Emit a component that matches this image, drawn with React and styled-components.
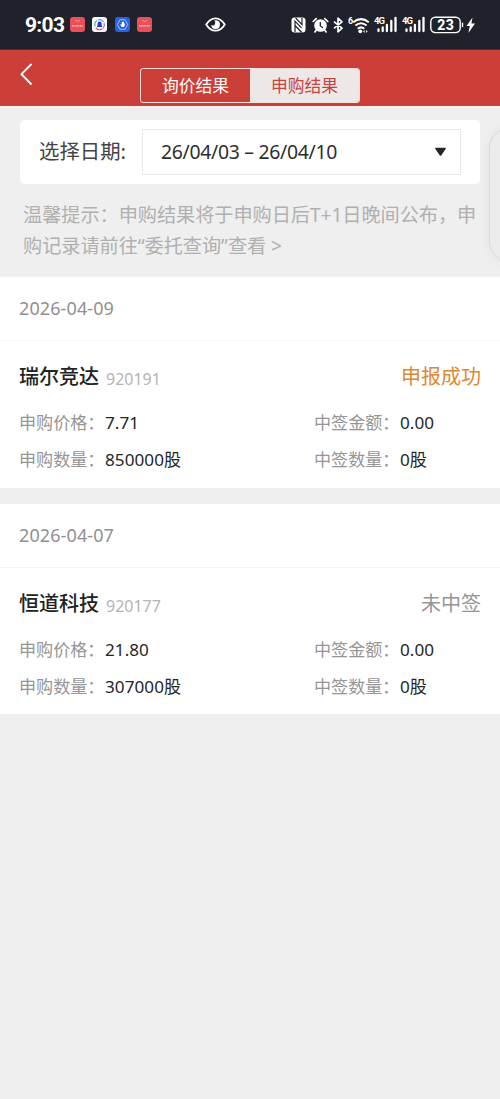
import React from 'react';
import styled, { createGlobalStyle } from 'styled-components';

const GlobalStyle = createGlobalStyle`
    * {
        box-sizing: border-box;
    }

    body {
        margin: 0;
        background-color: #efefef;
        font-family: 'Noto Sans', 'Noto Sans CJK SC', sans-serif;
        color: #262626;
    }
`;

const Page = styled.div`
    position: relative;
    min-height: 1099px;
    overflow: hidden;
    background-color: #efefef;
`;

const StatusBar = styled.div`
    display: flex;
    align-items: center;
    height: 50px;
    padding: 0 24px 0 25px;
    background-color: #1f222b;
    border-bottom: 1px solid #512a35;
    font-family: Roboto, sans-serif;
    color: #fff;

    svg {
        display: block;
        flex: none;
    }
`;

const Clock = styled.span`
    width: 39px;
    margin-right: 6px;
    font-size: 21px;
    font-weight: 700;
    letter-spacing: -.7px;
    white-space: nowrap;
`;

const AppIcons = styled.div`
    display: flex;
    gap: 7.4px;
    margin-right: 53px;
`;

const SystemIcons = styled.div`
    display: flex;
    align-items: center;
    gap: 4px;
    margin-left: auto;
`;

const Header = styled.header`
    display: flex;
    height: 56px;
    padding-left: 20px;
    background-color: #cc3f38;
    border-bottom: 1px solid #bd474a;
`;

const BackButton = styled.button`
    width: 13px;
    height: 24px;
    margin: 12px 107px 0 0;
    padding: 0;
    border: 0;
    background: none;
`;

const Tabs = styled.div`
    display: flex;
    width: 220px;
    height: 35px;
    margin-top: 18px;
    border: 1px solid #f7dedb;
    border-radius: 3px;
    overflow: hidden;
`;

const Tab = styled.div`
    flex: 1;
    font-size: 16.8px;
    line-height: 33px;
    text-align: center;
    color: ${({ $active }) => ($active ? '#c9433e' : '#fff')};
    background-color: ${({ $active }) => ($active ? '#ede7e7' : 'transparent')};
`;

const Filter = styled.div`
    display: flex;
    align-items: center;
    height: 64px;
    margin: 14px 20px 0;
    padding: 0 19px;
    background-color: #fff;
    border-radius: 5px;
`;

const FilterLabel = styled.span`
    width: 103px;
    padding-bottom: 4px;
    font-size: 20.4px;
    color: #444;
    white-space: nowrap;
`;

const DateSelect = styled.div`
    display: flex;
    flex: 1;
    align-items: center;
    justify-content: space-between;
    height: 46px;
    padding: 0 13px 0 18px;
    border: 1px solid #e8e8e8;
    font-size: 19.4px;
    line-height: 42px;
    letter-spacing: -.3px;
    color: #2e2e2e;
    white-space: nowrap;
`;

const Hint = styled.p`
    height: 93px;
    margin: 0;
    padding: 15px 20px 0 23px;
    font-size: 19.2px;
    line-height: 31px;
    letter-spacing: -.06px;
    color: #b0b0b0;
    white-space: nowrap;
`;

const Group = styled.section`
    height: ${({ $height }) => $height}px;
    margin-bottom: 16px;
    background-color: #fff;
`;

const GroupDate = styled.div`
    height: 64px;
    padding-left: 19px;
    border-bottom: 1px solid #f5f5f5;
    font-size: 18px;
    line-height: 62px;
    letter-spacing: .1px;
    color: #909090;
`;

const Record = styled.div`
    padding: 16px 19px 0;
`;

const RecordHead = styled.div`
    display: flex;
    height: 48px;
    line-height: 39px;
`;

const StockName = styled.span`
    font-size: 20px;
    font-weight: 500;
    color: #222;
`;

const StockCode = styled.span`
    margin-left: 7px;
    padding-top: 3px;
    font-size: 16px;
    color: #b4b4b4;
`;

const Status = styled.span`
    margin-left: auto;
    font-size: 20px;
    color: ${({ $success }) => ($success ? '#e08733' : '#959595')};
`;

const Fields = styled.div`
    display: grid;
    grid-template-columns: 295px 1fr;
    grid-auto-rows: 37px;
    font-size: 17.1px;
    line-height: 36px;
    white-space: nowrap;
`;

const Field = styled.div`
    display: flex;
`;

const FieldLabel = styled.span`
    width: 86px;
    color: #969696;
`;

const FieldValue = styled.span`
    letter-spacing: .05px;
    color: #262626;
`;

const SidePanel = styled.div`
    position: absolute;
    top: 128px;
    right: -30px;
    width: 41px;
    height: 134px;
    border: 1px solid #d9d9d9;
    border-radius: 20px;
    background-color: #ebebeb;
    box-shadow: 0 0 12px rgba(0, 0, 0, .05);
`;

const RedApp = () => (
    <svg width="15" height="15" viewBox="0 0 15 15">
        <rect width="15" height="15" rx="3" fill="#e9505a" />
        <path d="M5 3.2q2.5 2.6 5 0" fill="none" stroke="#f6a5a0" strokeWidth=".8" />
        <path d="M2 8.8h11" stroke="#ffc9c3" strokeWidth="1.3" strokeDasharray="1.2 .4" />
    </svg>
);

const BellApp = () => (
    <svg width="15" height="15" viewBox="0 0 15 15">
        <rect width="15" height="15" rx="3" fill="#f8f9fc" />
        <g fill="none" strokeWidth="1.2">
            <path d="M3.2 9.5a4.8 4.8 0 0 1 2-6" stroke="#55b884" />
            <path d="M6 3a4.8 4.8 0 0 1 5.5 2" stroke="#6b93ef" />
            <path d="M12 6a4.8 4.8 0 0 1-1 5" stroke="#be6edc" />
            <path d="M3.8 11a5 5 0 0 0 6.8.6" stroke="#ee4668" />
        </g>
        <path d="M4.8 10c1-1 .6-2.3.8-3.4a2 2 0 0 1 4 0c.2 1.1-.2 2.4.8 3.4z" fill="#2444bd" />
    </svg>
);

const HandApp = () => (
    <svg width="15" height="15" viewBox="0 0 15 15">
        <rect width="15" height="15" rx="3" fill="#2962e1" />
        <path d="M4.9 2.7h5.2l2.6 4.8-2.6 4.8H4.9L2.3 7.5z" fill="none" stroke="#a8c8ff" strokeWidth=".9" />
        <path d="M5.6 7v1.5l1.4 1.6h1.8l1-1.6V5.8L8.9 7V4.8H7.8L6.7 5v2.8z" fill="#fff" />
    </svg>
);

const EyeIcon = () => (
    <svg width="21" height="15" viewBox="0 0 21 15">
        <path d="M1.2 7.5Q5 1.3 10.5 1.3t9.3 6.2q-3.8 6.2-9.3 6.2T1.2 7.5z" fill="none" stroke="#fff" strokeWidth="1.8" />
        <path d="M11 3.2a4.4 4.4 0 1 1-4.8 4.6 2.3 2.3 0 0 0 3.9-1.2A2.6 2.6 0 0 0 9.2 3.6z" fill="#fff" />
    </svg>
);

const NfcIcon = () => (
    <svg width="16.5" height="16" viewBox="0 0 16.5 16">
        <rect x=".5" y=".5" width="14" height="15" rx="3" fill="#fff" />
        <path d="M4 15V4.2l6.5 6.7M4.6 1l6.4 6.6V1M4 8.5l6.8 7" fill="none" stroke="#1f222b" strokeWidth="1.2" />
    </svg>
);

const AlarmIcon = () => (
    <svg width="17.5" height="16" viewBox="0 0 17.5 16">
        <circle cx="8.5" cy="8.5" r="6.3" fill="#fff" />
        <path d="M1.2 4.5l3-2.9M15.8 4.5l-3-2.9M4.3 13l-1.4 1.9M12.7 13l1.4 1.9" stroke="#fff" strokeWidth="1.7" strokeLinecap="round" />
        <path d="M8.3 5v4l2.7 1.7" fill="none" stroke="#1f222b" strokeWidth="1.3" />
    </svg>
);

const BluetoothIcon = () => (
    <svg width="11" height="16" viewBox="0 0 11 16">
        <path d="M1 4.6l8 6.6-4 3.6V1.2l4 3.6-8 6.6" fill="none" stroke="#fff" strokeWidth="1.7" strokeLinejoin="round" />
    </svg>
);

const WifiIcon = () => (
    <svg width="22" height="18" viewBox="0 0 22 18">
        <text x="0" y="8" fill="#fff" fontSize="9" fontWeight="700">6</text>
        <g fill="none" stroke="#fff" strokeWidth="2">
            <path d="M5.2 6.3q7.8-6.4 15.6 0" />
            <path d="M7.4 9.6q5.6-4.8 11.2 0" />
            <path d="M9.7 12.7q3.3-2.7 6.6 0" />
        </g>
        <circle cx="12.3" cy="15.3" r="1.9" fill="#fff" />
        <path d="M16.7 13.8L15 15.4l1.700 1.600zM18 13.800l1.700 1.600L18 17z" fill="#ddd" />
    </svg>
);

const SignalIcon = () => (
    <svg width="24" height="17" viewBox="0 0 24 17">
        <text x="0" y="7.8" fill="#fff" fontSize="9.5" fontWeight="700" textLength="11">4G</text>
        <g stroke="#fff" strokeWidth="2.3" strokeLinecap="round">
            <path d="M4.5 13.5v1.5M8.7 11.5v3.5M12.9 9v6M17.3 5v10M21.5 2v13" />
        </g>
    </svg>
);

const BatteryIcon = () => (
    <svg width="46" height="18" viewBox="0 0 46 18">
        <rect x=".8" y="1.2" width="29.4" height="15.4" rx="4.5" fill="none" stroke="#fff" strokeWidth="1.4" />
        <path d="M32.5 6.7v4.4" stroke="#fff" strokeWidth="1.4" />
        <text x="15.5" y="13.9" fill="#fff" fontSize="14" fontWeight="800" textAnchor="middle" textLength="16.5">23</text>
        <path d="M42.5 1.500L36.500 10h3.300l-1.400 7L45 7.500h-3.600z" fill="#fff" />
    </svg>
);

const groups = [
    {
        date: '2026-04-09',
        height: 211,
        name: '瑞尔竞达',
        code: '920191',
        status: '申报成功',
        success: true,
        fields: [
            ['申购价格：', '7.71'],
            ['中签金额：', '0.00'],
            ['申购数量：', '850000股'],
            ['中签数量：', '0股'],
        ],
    },
    {
        date: '2026-04-07',
        height: 210,
        name: '恒道科技',
        code: '920177',
        status: '未中签',
        success: false,
        fields: [
            ['申购价格：', '21.80'],
            ['中签金额：', '0.00'],
            ['申购数量：', '307000股'],
            ['中签数量：', '0股'],
        ],
    },
];

const App = () => {
    return (
        <Page>
            <GlobalStyle />
            <StatusBar>
                <Clock>9:03</Clock>
                <AppIcons>
                    <RedApp />
                    <BellApp />
                    <HandApp />
                    <RedApp />
                </AppIcons>
                <EyeIcon />
                <SystemIcons>
                    <NfcIcon />
                    <AlarmIcon />
                    <BluetoothIcon />
                    <WifiIcon />
                    <SignalIcon />
                    <SignalIcon />
                    <BatteryIcon />
                </SystemIcons>
            </StatusBar>
            <Header>
                <BackButton aria-label="返回">
                    <svg width="13" height="24" viewBox="0 0 13 24">
                        <path d="M11.5 2L1.5 12.2l10 10.3" fill="none" stroke="#fff" strokeWidth="1.8" />
                    </svg>
                </BackButton>
                <Tabs>
                    <Tab>询价结果</Tab>
                    <Tab $active>申购结果</Tab>
                </Tabs>
            </Header>
            <Filter>
                <FilterLabel>选择日期:</FilterLabel>
                <DateSelect>
                    26/04/03 – 26/04/10
                    <svg width="13" height="10" viewBox="0 0 13 10">
                        <path d="M2 1.5h9L6.5 8z" fill="#262626" stroke="#262626" strokeWidth="1.6" strokeLinejoin="round" />
                    </svg>
                </DateSelect>
            </Filter>
            <Hint>
                温馨提示：申购结果将于申购日后T+1日晚间公布，申
                <br />
                购记录请前往“委托查询”查看 &gt;
            </Hint>
            {groups.map((group) => (
                <Group key={group.date} $height={group.height}>
                    <GroupDate>{group.date}</GroupDate>
                    <Record>
                        <RecordHead>
                            <StockName>{group.name}</StockName>
                            <StockCode>{group.code}</StockCode>
                            <Status $success={group.success}>{group.status}</Status>
                        </RecordHead>
                        <Fields>
                            {group.fields.map(([label, value]) => (
                                <Field key={label}>
                                    <FieldLabel>{label}</FieldLabel>
                                    <FieldValue>{value}</FieldValue>
                                </Field>
                            ))}
                        </Fields>
                    </Record>
                </Group>
            ))}
            <SidePanel />
        </Page>
    );
};

export default App;
